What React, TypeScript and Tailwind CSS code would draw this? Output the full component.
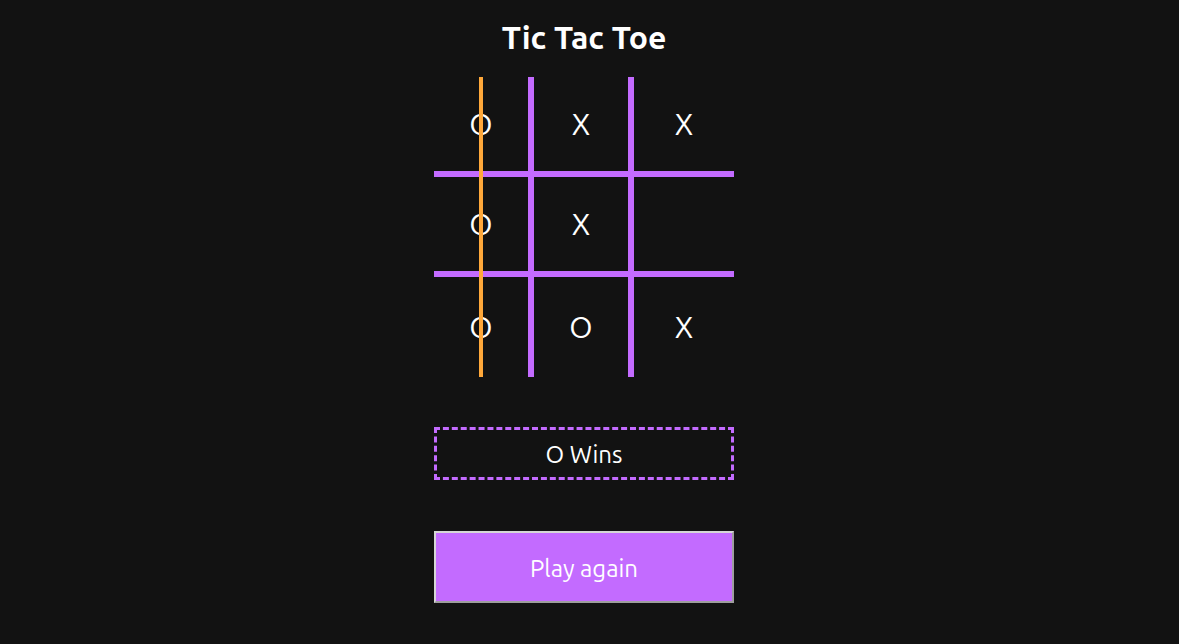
import { useState } from 'react';

const board = ['O', 'X', 'X', 'O', 'X', '', 'O', 'O', 'X'];

export default function App() {
  const [cells] = useState(board);

  return (
    <div className="min-h-screen bg-[#121212] text-white flex flex-col items-center pt-[18px] pr-[11px] font-['Ubuntu','Open_Sans','Noto_Sans',sans-serif]">
      <h1 className="text-[32px] leading-[38px] font-bold">Tic Tac Toe</h1>

      {/* Board */}
      <div className="relative mt-[21px] grid grid-cols-3 w-[300px]">
        {cells.map((c, i) => {
          const col = i % 3;
          const row = Math.floor(i / 3);
          return (
            <div
              key={i}
              className={
                'h-[100px] flex items-center justify-center text-[30px] border-[#c36bff] ' +
                (col < 2 ? 'border-r-[6px] ' : '') +
                (row < 2 ? 'border-b-[6px]' : '')
              }
            >
              {c}
            </div>
          );
        })}
        {/* winning line */}
        <div className="absolute top-0 bottom-0 left-[45px] w-[4px] bg-[#ffa83a]" />
      </div>

      <div className="mt-[50px] w-[300px] h-[53px] pt-[3px] border-[3px] border-dashed border-[#c36bff] flex items-center justify-center text-[24px]">
        O Wins
      </div>

      <button className="mt-[51px] w-[300px] h-[72px] pt-[3px] bg-[#c36bff] border-2 border-t-[#d6d6d6] border-l-[#d6d6d6] border-r-[#9e9e9e] border-b-[#9e9e9e] text-[24px] text-white">
        Play again
      </button>
    </div>
  );
}
